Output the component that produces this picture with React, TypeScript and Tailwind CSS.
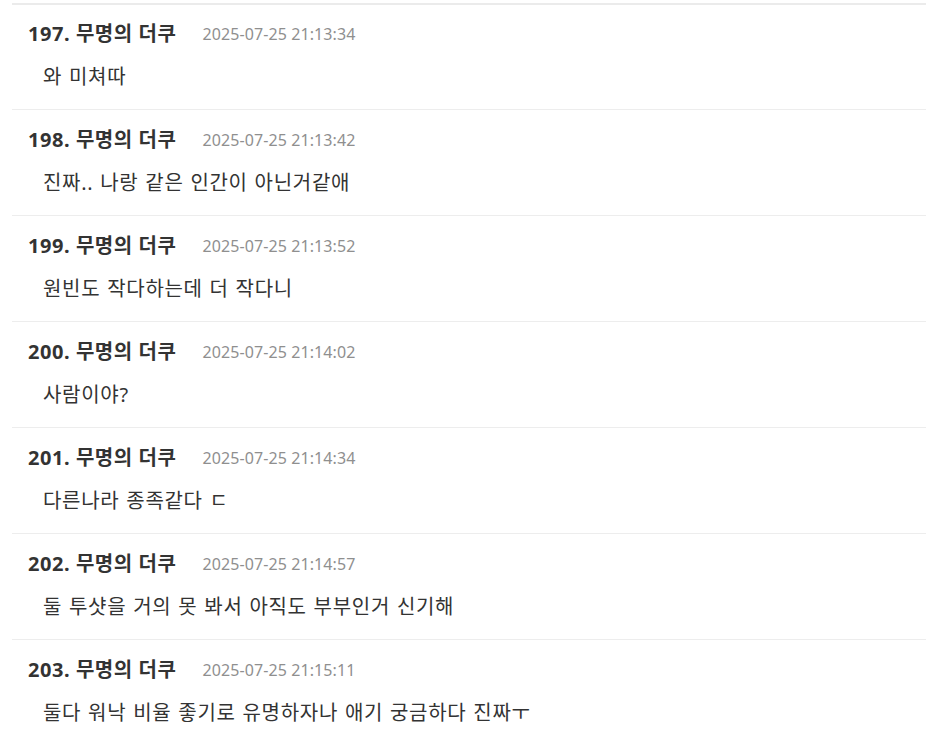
import React from "react";

const comments = [
  { no: 197, time: "2025-07-25 21:13:34", body: "와 미쳐따" },
  { no: 198, time: "2025-07-25 21:13:42", body: "진짜.. 나랑 같은 인간이 아닌거같애" },
  { no: 199, time: "2025-07-25 21:13:52", body: "원빈도 작다하는데 더 작다니" },
  { no: 200, time: "2025-07-25 21:14:02", body: "사람이야?" },
  { no: 201, time: "2025-07-25 21:14:34", body: "다른나라 종족같다 ㄷ" },
  { no: 202, time: "2025-07-25 21:14:57", body: "둘 투샷을 거의 못 봐서 아직도 부부인거 신기해" },
  { no: 203, time: "2025-07-25 21:15:11", body: "둘다 워낙 비율 좋기로 유명하자나 애기 궁금하다 진짜ㅜ" },
];

export default function App() {
  return (
    <div className="h-[741px] overflow-hidden bg-white font-['Noto_Sans','Noto_Sans_CJK_KR',sans-serif] text-[#333]">
      <ul className="ml-[12px] mt-[3px] border-t-2 border-[#ebebeb]">
        {comments.map((c) => (
          <li key={c.no} className="border-b border-[#ededed] px-4 pt-[15px] pb-[17px] first:pt-[14px]">
            <div className="flex items-center h-[30px]">
              <span className="text-[20px] font-bold tracking-[0.55px] text-[#333]">
                {c.no}. 무명의 더쿠
              </span>
              <span className="ml-[26px] text-[16px] tracking-[0.1px] text-[#8f8f8f]">{c.time}</span>
            </div>
            <p className="mt-[13px] pl-[15px] text-[20px] leading-[30px] tracking-[0.7px] [word-spacing:1px]">
              {c.body}
            </p>
          </li>
        ))}
      </ul>
    </div>
  );
}
